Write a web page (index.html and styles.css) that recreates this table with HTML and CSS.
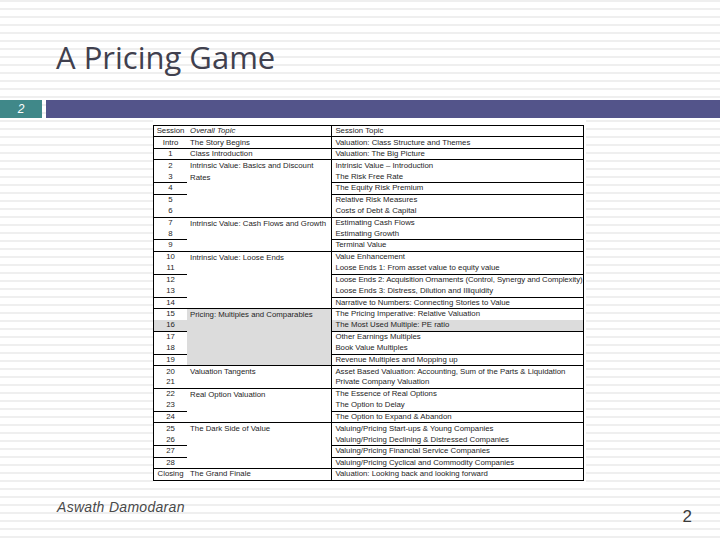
FILE: index.html
```html
<!DOCTYPE html>
<html>
<head>
<meta charset="utf-8">
<link rel="stylesheet" href="styles.css">
</head>
<body>
<div class="slide">
  <h1 class="title">A Pricing Game</h1>
  <div class="bar">
    <div class="num">2</div>
    <div class="band"></div>
  </div>
  <div class="tablewrap">
    <table class="sched">
      <tr class="l head"><td class="c1">Session</td><td class="c2 it">Overall Topic</td><td class="c3">Session Topic</td></tr>
      <tr class="l"><td class="c1">Intro</td><td class="c2">The Story Begins</td><td class="c3">Valuation: Class Structure and Themes</td></tr>
      <tr class="l"><td class="c1">1</td><td class="c2">Class Introduction</td><td class="c3">Valuation: The Big Picture</td></tr>
      <tr><td class="c1">2</td><td class="c2 m" rowspan="5">Intrinsic Value: Basics and Discount Rates</td><td class="c3">Intrinsic Value – Introduction</td></tr>
      <tr class="l"><td class="c1">3</td><td class="c3">The Risk Free Rate</td></tr>
      <tr class="l"><td class="c1">4</td><td class="c3">The Equity Risk Premium</td></tr>
      <tr><td class="c1">5</td><td class="c3">Relative Risk Measures</td></tr>
      <tr class="l"><td class="c1">6</td><td class="c3">Costs of Debt &amp; Capital</td></tr>
      <tr><td class="c1">7</td><td class="c2 m" rowspan="3">Intrinsic Value: Cash Flows and Growth</td><td class="c3">Estimating Cash Flows</td></tr>
      <tr class="l"><td class="c1">8</td><td class="c3">Estimating Growth</td></tr>
      <tr class="l"><td class="c1">9</td><td class="c3">Terminal Value</td></tr>
      <tr><td class="c1">10</td><td class="c2 m" rowspan="5">Intrinsic Value: Loose Ends</td><td class="c3">Value Enhancement</td></tr>
      <tr class="l"><td class="c1">11</td><td class="c3">Loose Ends 1: From asset value to equity value</td></tr>
      <tr><td class="c1">12</td><td class="c3 tight">Loose Ends 2: Acquisition Ornaments (Control, Synergy and Complexity)</td></tr>
      <tr class="l"><td class="c1">13</td><td class="c3">Loose Ends 3: Distress, Dilution and Illiquidity</td></tr>
      <tr class="l"><td class="c1">14</td><td class="c3">Narrative to Numbers: Connecting Stories to Value</td></tr>
      <tr><td class="c1">15</td><td class="c2 m gray" rowspan="5">Pricing: Multiples and Comparables</td><td class="c3">The Pricing Imperative: Relative Valuation</td></tr>
      <tr class="l gray"><td class="c1">16</td><td class="c3">The Most Used Multiple: PE ratio</td></tr>
      <tr><td class="c1">17</td><td class="c3">Other Earnings Multiples</td></tr>
      <tr class="l"><td class="c1">18</td><td class="c3">Book Value Multiples</td></tr>
      <tr class="l"><td class="c1">19</td><td class="c3">Revenue Multiples and Mopping up</td></tr>
      <tr><td class="c1">20</td><td class="c2 m" rowspan="2">Valuation Tangents</td><td class="c3">Asset Based Valuation: Accounting, Sum of the Parts &amp; Liquidation</td></tr>
      <tr class="l"><td class="c1">21</td><td class="c3">Private Company Valuation</td></tr>
      <tr><td class="c1">22</td><td class="c2 m" rowspan="3">Real Option Valuation</td><td class="c3">The Essence of Real Options</td></tr>
      <tr class="l"><td class="c1">23</td><td class="c3">The Option to Delay</td></tr>
      <tr class="l"><td class="c1">24</td><td class="c3">The Option to Expand &amp; Abandon</td></tr>
      <tr><td class="c1">25</td><td class="c2 m" rowspan="4">The Dark Side of Value</td><td class="c3">Valuing/Pricing Start-ups &amp; Young Companies</td></tr>
      <tr class="l"><td class="c1">26</td><td class="c3">Valuing/Pricing Declining &amp; Distressed Companies</td></tr>
      <tr class="l"><td class="c1">27</td><td class="c3">Valuing/Pricing Financial Service Companies</td></tr>
      <tr class="l"><td class="c1">28</td><td class="c3">Valuing/Pricing Cyclical and Commodity Companies</td></tr>
      <tr class="l"><td class="c1">Closing</td><td class="c2">The Grand Finale</td><td class="c3">Valuation: Looking back and looking forward</td></tr>
    </table>
  </div>
  <div class="footer">
    <span class="author">Aswath Damodaran</span>
    <span class="page">2</span>
  </div>
</div>
</body>
</html>
```

FILE: styles.css
```css
html, body {
  margin: 0;
  padding: 0;
}
body {
  width: 720px;
  height: 540px;
  overflow: hidden;
  background: repeating-linear-gradient(to bottom, #efefef 0px, #efefef 2px, #ffffff 2px, #ffffff 8px);
}
.slide {
  width: 720px;
  height: 540px;
  display: flex;
  flex-direction: column;
}
.title {
  margin: 42px 0 0 56px;
  font-family: "Open Sans", sans-serif;
  font-weight: normal;
  font-size: 31px;
  line-height: 31px;
  height: 31px;
  color: #40404e;
}
.bar {
  margin-top: 27px;
  height: 18px;
  display: flex;
  gap: 4px;
}
.num {
  width: 42px;
  background: #408889;
  color: #ffffff;
  font-family: "Liberation Sans", sans-serif;
  font-style: italic;
  font-size: 12px;
  line-height: 18px;
  text-align: center;
}
.band {
  flex: 1;
  background: #53548a;
}
.tablewrap {
  margin-top: 0;
  padding: 7px 1px 1px 0;
  margin-left: 153px;
  width: 432px;
  background: #ffffff;
}
.sched {
  border-collapse: collapse;
  width: 431px;
  table-layout: fixed;
  border: 1px solid #000;
  font-family: "Liberation Sans", sans-serif;
  font-size: 7.8px;
  color: #1e1e1e;
  background: #ffffff;
}
.sched tr {
  height: 11.45px;
}
.sched td {
  padding: 0 0 0 3px;
  line-height: 10.3px;
  white-space: nowrap;
  vertical-align: middle;
  overflow: visible;
}
.sched td.c1 {
  width: 33px;
  padding: 0;
  text-align: center;
}
.sched td.c2 {
  width: 141px;
  border-right: 1px solid #000;
  border-bottom: 1px solid #000;
}
.sched td.c2.m {
  white-space: normal;
  vertical-align: top;
  line-height: 11.45px;
  padding-right: 2px;
}
.sched td.c3 {
  width: 247px;
}
.sched td.tight {
  letter-spacing: -0.06px;
}
.sched tr.l td.c1,
.sched tr.l td.c3 {
  border-bottom: 1px solid #000;
}
.sched .it {
  font-style: italic;
}
.sched .gray,
.sched tr.gray td {
  background: #dcdcdc;
}
.footer {
  margin-top: 17px;
  display: flex;
  justify-content: space-between;
  align-items: flex-start;
  padding: 0 28px 0 57px;
}
.author {
  font-family: "Liberation Sans", sans-serif;
  font-style: italic;
  font-size: 14px;
  letter-spacing: 0.3px;
  color: #4a4a4a;
}
.page {
  margin-top: 8px;
  font-family: "Liberation Sans", sans-serif;
  font-size: 17px;
  color: #3a3a3a;
}
```
